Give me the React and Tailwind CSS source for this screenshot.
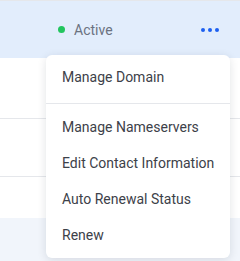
import React from 'react';

const items = ['Manage Nameservers', 'Edit Contact Information', 'Auto Renewal Status', 'Renew'];

export default function App() {
  return (
    <div className="relative w-[240px] h-[261px] overflow-hidden bg-white flex flex-col" style={{ fontFamily: 'Roboto, "Liberation Sans", sans-serif' }}>
      <div className="h-px bg-[#e5e7eb]" />
      {/* Selected row */}
      <div className="h-[57px] flex items-center bg-[#e2edfc] pl-[58px] pr-[21px]">
        <span className="w-[7px] h-[7px] rounded-full bg-[#22c55e]" />
        <span className="ml-[9px] text-[14px] leading-5 text-[#6b7280]">Active</span>
        <button className="ml-auto flex items-center gap-[3px]">
          <span className="w-1 h-1 rounded-full bg-[#1d5ff0]" />
          <span className="w-1 h-1 rounded-full bg-[#1d5ff0]" />
          <span className="w-1 h-1 rounded-full bg-[#1d5ff0]" />
        </button>
      </div>
      <div className="h-[61px] border-b border-[#e5e7eb]" />
      <div className="h-[58px] border-b border-[#e5e7eb]" />
      <div className="h-[41px]" />
      <div className="flex-1 bg-[#f1f5fb]" />

      {/* Dropdown menu */}
      <div className="absolute left-[46px] top-[55px] w-[184px] rounded-md bg-white shadow-[0_2px_10px_rgba(15,23,42,0.12)] text-[14px] leading-5 text-[#3d4149] whitespace-nowrap">
        <div className="pt-1 pb-2 border-b border-[#e5e7eb]">
          <div className="h-9 flex items-center px-4">Manage Domain</div>
        </div>
        <div className="pt-[5px] pb-[5px]">
          {items.map((label) => (
            <div key={label} className="h-9 flex items-center px-4">{label}</div>
          ))}
        </div>
      </div>
    </div>
  );
}
